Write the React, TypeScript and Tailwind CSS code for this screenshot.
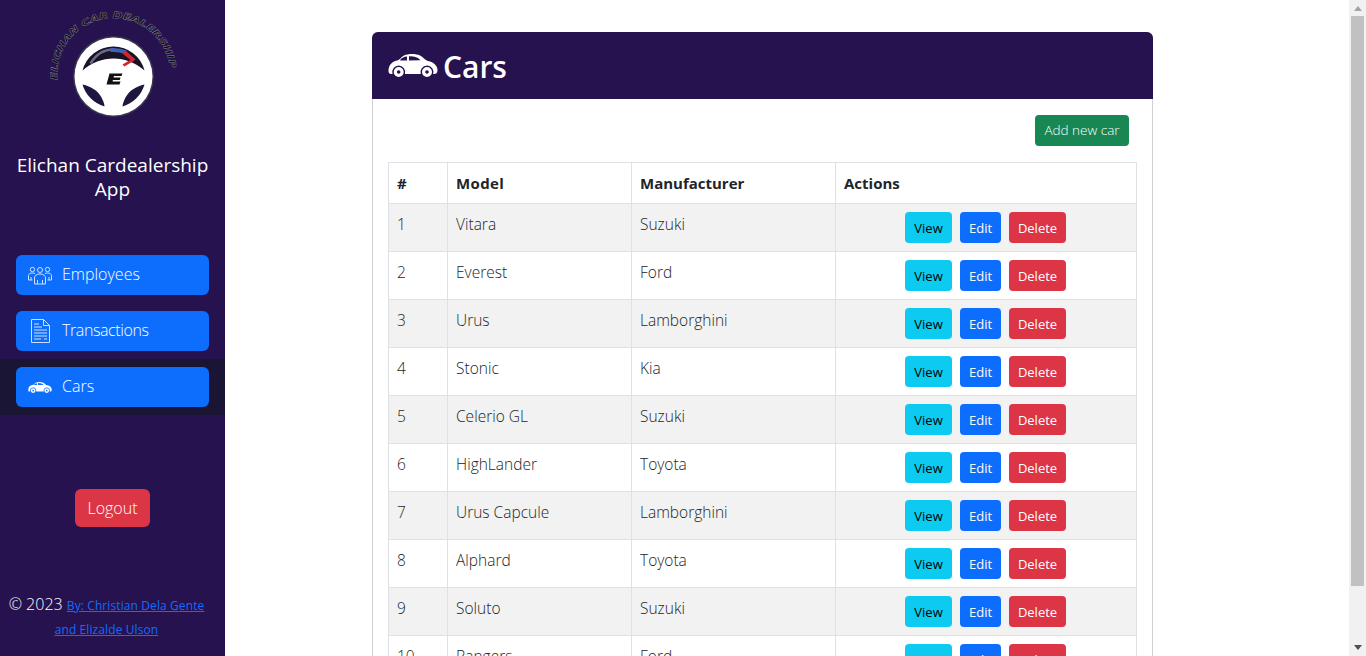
import type { ReactNode } from "react";

const cars = [
  { id: 1, model: "Vitara", maker: "Suzuki" },
  { id: 2, model: "Everest", maker: "Ford" },
  { id: 3, model: "Urus", maker: "Lamborghini" },
  { id: 4, model: "Stonic", maker: "Kia" },
  { id: 5, model: "Celerio GL", maker: "Suzuki" },
  { id: 6, model: "HighLander", maker: "Toyota" },
  { id: 7, model: "Urus Capcule", maker: "Lamborghini" },
  { id: 8, model: "Alphard", maker: "Toyota" },
  { id: 9, model: "Soluto", maker: "Suzuki" },
  { id: 10, model: "Rangers", maker: "Ford" },
];

const CarIcon = ({ className }: { className: string }) => (
  <svg viewBox="0 0 50 25" className={className}>
    <path
      fill="currentColor"
      fillRule="evenodd"
      d="M.500 18C.500 12 4 8.500 9 7.500 12 7 13 4 16 2.500c4-2 12-2 16 0 3 1.500 5 4.500 8 5.500 6 1 9.500 5 9.500 9 0 3-1.500 4-3.500 4h-.800A6.500 6.500 0 1 0 32.800 21H16.900A6.500 6.500 0 1 0 4.500 21H3C1.500 21 .500 20 .500 18zM12 7.500h7V3.500c-3 .200-6 1.500-7 4zM21 7.500l11.500-.200C30.500 4.500 26 3 21 3.200z"
    />
    <path
      fill="currentColor"
      fillRule="evenodd"
      d="M10.700 14a5 5 0 1 0 0 10 5 5 0 0 0 0-10zm0 3.200a1.800 1.800 0 1 1 0 3.600 1.800 1.800 0 0 1 0-3.600zM39 14a5 5 0 1 0 0 10 5 5 0 0 0 0-10zm0 3.200a1.800 1.800 0 1 1 0 3.600 1.800 1.800 0 0 1 0-3.600z"
    />
  </svg>
);

const PeopleIcon = () => (
  <svg viewBox="0 0 24 19" className="w-6 h-[19px] text-[#cfe0ff]" fill="none" stroke="currentColor" strokeWidth="1">
    <circle cx="12" cy="4" r="2.500" />
    <circle cx="4.500" cy="3.500" r="2.200" />
    <circle cx="19.500" cy="3.500" r="2.200" />
    <path d="M6.500 18v-6c0-2.500 2-4 5.500-4s5.500 1.500 5.500 4v6zM9.500 18v-4M14.500 18v-4" />
    <path d="M4.500 14H.500V9.500C.500 8 2 7 4.500 7c1 0 2 .200 2.500.500M19.500 14h4V9.500C23.500 8 22 7 19.500 7c-1 0-2 .200-2.500.500M3 14v-3M21 14v-3" />
  </svg>
);

const DocIcon = () => (
  <svg viewBox="0 0 19 24" className="w-[19px] h-6 text-[#cfe0ff]" fill="none" stroke="currentColor" strokeWidth="1">
    <path d="M.500.500h12l6 6v17H.500z" />
    <path d="M12.500.500v6h6" />
    <path d="M3 5h5M3 8h8M3 11h13M3 14h13M3 17h13M3 20h7M13 20h3" />
  </svg>
);

// steering wheel badge with the dealership name bent over it
const Logo = () => (
  <svg viewBox="0 0 130 110" className="w-[130px] h-[110px]">
    <defs>
      <path id="logo-arc" d="M9.500 70A56.500 56.500 0 1 1 122 70" />
    </defs>
    <text
      fontFamily="'DejaVu Sans', sans-serif"
      fontSize="9"
      fontWeight="700"
      fontStyle="italic"
      fill="#100c1e"
      stroke="#8a8794"
      strokeWidth="0.400"
    >
      <textPath href="#logo-arc" textLength="176" lengthAdjust="spacingAndGlyphs">
        ELICHAN CAR DEALERSHIP
      </textPath>
    </text>
    <g transform="translate(65.500 66.500)">
      <circle r="40.500" fill="#3a3550" />
      <circle r="39" fill="#fff" />
      <path d="M-31-6A32 32 0 0 1 31-6C22-14 11-18 0-18S-22-14-31-6z" fill="#181428" />
      <path d="M-23-13C-17-23-8-27 0-27" fill="none" stroke="#6d6a86" strokeWidth="2.500" />
      <path d="M-3-26.500C3-27 8-26 13-24" fill="none" stroke="#3f62b5" strokeWidth="4" />
      <path d="M12-26l10 9-3 2-10-8zM9-12l10-6 2 2-10 6z" fill="#d8232f" />
      <path d="M-31 8C-22 10-16 14-12 21-10 25-9 28-9 30A32 32 0 0 1-31 8z" fill="#1f1640" />
      <path d="M31 8C22 10 16 14 12 21 10 25 9 28 9 30A32 32 0 0 0 31 8z" fill="#1f1640" />
      <path d="M-4-3H9L8-.500H.500L0 1H7L6.300 3.500H-.500L-1 5H7L6 8H-7z" fill="#111" />
    </g>
  </svg>
);

const NavButton = ({ icon, label, labelClass }: { icon: ReactNode; label: string; labelClass?: string }) => (
  <div className="flex items-center h-10 w-[193px] rounded-md bg-[#0d6efd] text-white">
    <div className="w-[46px] flex justify-center shrink-0 pl-[2px]">{icon}</div>
    <span className={`text-base font-light pb-[3px] ${labelClass ?? ""}`}>{label}</span>
  </div>
);

const Btn = ({ className, children }: { className: string; children: ReactNode }) => (
  <button className={`h-[31px] rounded text-[13px] ${className}`}>{children}</button>
);

const Sidebar = () => (
  <aside className="w-[225px] shrink-0 h-full bg-[#25124f] text-white flex flex-col items-center">
    <div className="h-[120px] pt-[10px]">
      <Logo />
    </div>
    <h1 className="mt-[33px] text-[19px] leading-6 text-center w-[205px]">Elichan Cardealership App</h1>
    <nav className="mt-[46px] w-full flex flex-col">
      <div className="h-14 flex items-center justify-center">
        <NavButton icon={<PeopleIcon />} label="Employees" />
      </div>
      <div className="h-14 flex items-center justify-center">
        <NavButton icon={<DocIcon />} label="Transactions" labelClass="tracking-[-0.4px]" />
      </div>
      <div className="h-14 flex items-center justify-center bg-[#1a1535]">
        <NavButton icon={<CarIcon className="w-6 h-[13px] text-white" />} label="Cars" />
      </div>
    </nav>
    <button className="mt-[74px] w-[75px] h-[38px] rounded-md bg-[#dc3545] text-base font-light">Logout</button>
    <p className="mt-[65px] mr-[12px] w-[205px] text-center leading-6">
      <span className="text-base font-light">© 2023 </span>
      <a className="text-xs text-[#0d6efd] underline tracking-[0.1px]">By: Christian Dela Gente and Elizalde Ulson</a>
    </p>
  </aside>
);

const CarsTable = () => (
  <table className="w-[749px] table-fixed border-collapse text-[#212529] text-[15.5px] leading-6">
    <colgroup>
      <col className="w-[59px]" />
      <col className="w-[184px]" />
      <col className="w-[204px]" />
      <col />
    </colgroup>
    <thead>
      <tr className="h-[41px] text-left">
        <th className="border border-[#dee2e6] px-2 font-bold text-[15px]">#</th>
        <th className="border border-[#dee2e6] px-2 font-bold text-[15px] tracking-wide">Model</th>
        <th className="border border-[#dee2e6] px-2 font-bold text-[15px]">Manufacturer</th>
        <th className="border border-[#dee2e6] px-2 font-bold text-[15px]">Actions</th>
      </tr>
    </thead>
    <tbody>
      {cars.map((car, i) => (
        <tr key={car.id} className={i % 2 === 0 ? "bg-[#f2f2f2]" : "bg-white"}>
          <td className="border border-[#dee2e6] p-2 align-top font-light">{car.id}</td>
          <td className="border border-[#dee2e6] p-2 align-top font-light">{car.model}</td>
          <td className="border border-[#dee2e6] p-2 align-top font-light">{car.maker}</td>
          <td className="border border-[#dee2e6] p-2 align-top">
            <div className="flex justify-center gap-2 h-[31px] pr-[1px]">
              <Btn className="w-[47px] bg-[#0dcaf0] text-black">View</Btn>
              <Btn className="w-[41px] bg-[#0d6efd] text-white">Edit</Btn>
              <Btn className="w-[57px] bg-[#dc3545] text-white">Delete</Btn>
            </div>
          </td>
        </tr>
      ))}
    </tbody>
  </table>
);

const Scrollbar = () => (
  <div className="w-[17px] shrink-0 h-full bg-[#f1f1f1] flex flex-col">
    <div className="h-4 flex items-center justify-center">
      <svg viewBox="0 0 8 5" className="w-2 h-[5px] text-[#a3a3a3]">
        <path fill="currentColor" d="M4 0l4 5H0z" />
      </svg>
    </div>
    <div className="h-[570px] mx-[2px] bg-[#c1c1c1]" />
    <div className="mt-auto h-[17px] flex items-center justify-center">
      <svg viewBox="0 0 8 5" className="w-2 h-[5px] text-[#505050]">
        <path fill="currentColor" d="M0 0h8L4 5z" />
      </svg>
    </div>
  </div>
);

export default function App() {
  return (
    <div className="flex h-[656px] w-full overflow-hidden font-['Open_Sans',sans-serif]">
      <Sidebar />
      <main className="flex-1 h-full overflow-hidden bg-white pl-[147px] pt-[32px]">
        <section className="w-[781px] rounded-md border border-[#cfcfd4] bg-white">
          <header className="h-[67px] -mx-px -mt-px rounded-t-md bg-[#25124f] text-white flex items-center pl-[16px] gap-[5px]">
            <CarIcon className="w-[50px] h-[25px]" />
            <h2 className="text-[30px] font-semibold leading-none pt-[2px]">Cars</h2>
          </header>
          <div className="pl-[15px] pt-4">
            <div className="flex justify-end pr-[23px] mb-4">
              <button className="w-[94px] h-[31px] rounded bg-[#198754] text-white text-[13.5px] font-light">Add new car</button>
            </div>
            <CarsTable />
          </div>
        </section>
      </main>
      <Scrollbar />
    </div>
  );
}
